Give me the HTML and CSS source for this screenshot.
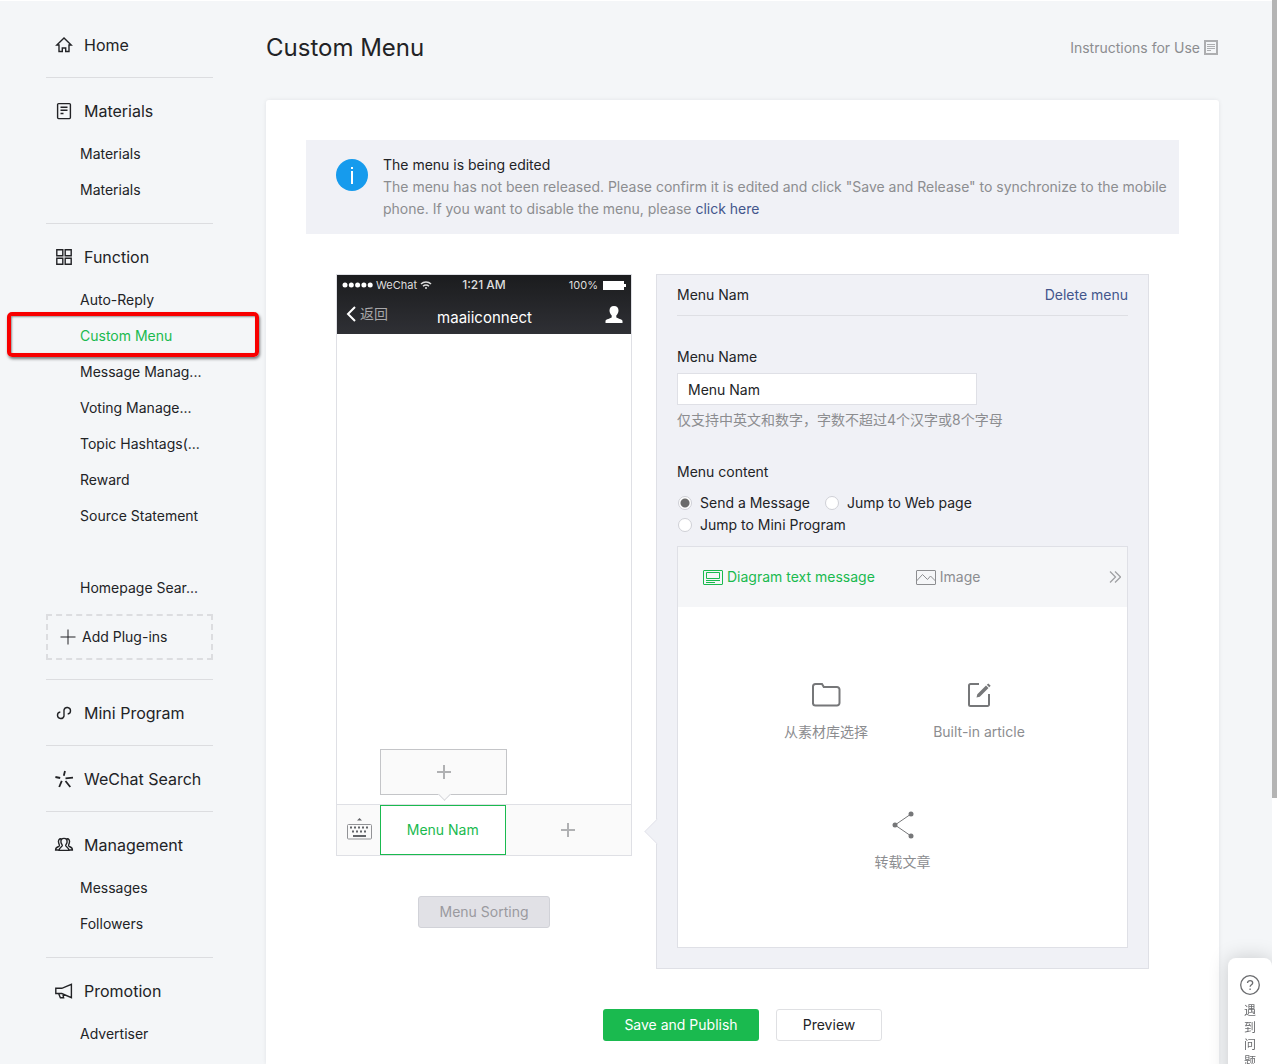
FILE: index.html
```html
<!DOCTYPE html>
<html lang="en">
<head>
<meta charset="utf-8">
<title>Custom Menu</title>
<meta name="viewport" content="width=device-width, initial-scale=1">
<link rel="stylesheet" href="styles.css">
</head>
<body>
<div class="layout">
  <nav class="sidebar" aria-label="Main">
    <section class="nav-group">
      <a class="nav-title" href="#home">
        <svg class="nav-icon" viewBox="0 0 16 16"><path d="M8 1 .8 8H3v6.500h3.300V11h3.400v3.500H13V8h2.200z"/></svg>Home</a>
    </section>
    <section class="nav-group">
      <a class="nav-title" href="#materials">
        <svg class="nav-icon" viewBox="0 0 16 16"><rect x="1.600" y=".6" width="12.800" height="15" rx="1"/><path d="M4.500 4.300h7M4.500 7.300h7M4.500 10.500h3"/></svg>Materials</a>
      <ul class="nav-list">
        <li><a href="#m1">Materials</a></li>
        <li><a href="#m2">Materials</a></li>
      </ul>
    </section>
    <section class="nav-group">
      <a class="nav-title" href="#function">
        <svg class="nav-icon" viewBox="0 0 16 16"><path d="M.8.800h6v6h-6zM9.200.800h6v6h-6zM.8 9.200h6v6h-6zM9.200 9.200h6v6h-6z"/></svg>Function</a>
      <ul class="nav-list">
        <li><a href="#auto">Auto-Reply</a></li>
        <li class="current"><a href="#menu" aria-current="page">Custom Menu</a></li>
        <li><a href="#message">Message Manag...</a></li>
        <li><a href="#voting">Voting Manage...</a></li>
        <li><a href="#topic">Topic Hashtags(...</a></li>
        <li><a href="#reward">Reward</a></li>
        <li><a href="#source">Source Statement</a></li>
        <li></li>
        <li><a href="#search">Homepage Sear...</a></li>
      </ul>
      <button class="add-plugin" type="button"><svg class="icon-plus" viewBox="0 0 16 16"><path d="M8 .500v15M.5 8h15"/></svg>Add Plug-ins</button>
    </section>
    <section class="nav-group">
      <a class="nav-title" href="#mini">
        <svg class="nav-icon" viewBox="0 0 16 16"><path d="M4.300 7A3.300 3.300 0 1 0 8 11V5a3.300 3.300 0 1 1 3.700 4"/></svg>Mini Program</a>
    </section>
    <section class="nav-group">
      <a class="nav-title" href="#wsearch">
        <svg class="nav-icon heavy" viewBox="0 0 16 16"><path d="M9 0 7.800 4.800M-.6 6l4.800 1M9.500 7.300l7.500-.6M5.800 9.800 3.200 16M9.500 10l4.800 6"/></svg>WeChat Search</a>
    </section>
    <section class="nav-group">
      <a class="nav-title" href="#management">
        <svg class="nav-icon" viewBox="0 0 16 16"><path d="M8 1.400C5.500 1.400 4.600 3 5 5.300c.2 1.500 1.500 2.300 1.300 3.400C6 10 3 10.500 3 13.400h10c0-2.900-3-3.400-3.300-4.700C9.500 7.600 10.800 6.800 11 5.300c.4-2.300-.5-3.900-3-3.900zM5.500 1.900C3 1.400 1.900 3.500 2.700 6c.5 1.500 1 2.200.6 3C2.800 10-.5 9.800-.4 13H3M10.500 1.900c2.500-.5 3.600 1.600 2.800 4.100-.5 1.500-1 2.200-.6 3 .5 1 3.800.8 3.700 4H13"/></svg>Management</a>
      <ul class="nav-list">
        <li><a href="#messages">Messages</a></li>
        <li><a href="#followers">Followers</a></li>
      </ul>
    </section>
    <section class="nav-group">
      <a class="nav-title" href="#promotion">
        <svg class="nav-icon" viewBox="0 0 16 16"><path d="M-.2 5.300h6l9.600-4v13.400L5.800 10.500h-6zM2.600 10.500l1.800 4.300h3.200l-.8-4"/></svg>Promotion</a>
      <ul class="nav-list">
        <li><a href="#advertiser">Advertiser</a></li>
      </ul>
    </section>
  </nav>

  <main class="main">
    <header class="page-head">
      <h1>Custom Menu</h1>
      <a class="instructions" href="#instructions">Instructions for Use
        <svg class="icon-doc" viewBox="0 0 14 15"><path class="frame" d="M1 1h12v13H1z"/><path d="M3 4.500h8M3 6.500h8M3 8.500h8M3 10.500h4"/></svg></a>
    </header>

    <div class="card">
      <div class="notice">
        <svg class="icon-info" viewBox="0 0 32 32"><circle cx="16" cy="16" r="16"/><path d="M15 8h2v2h-2zM15 12h2v13h-2z"/></svg>
        <div>
          <p class="notice-title">The menu is being edited</p>
          <p class="notice-text">The menu has not been released. Please confirm it is edited and click "Save and Release" to synchronize to the mobile phone. If you want to disable the menu, please <a href="#disable">click here</a></p>
        </div>
      </div>

      <div class="editor">
        <div class="preview">
          <div class="phone">
            <div class="phone-head">
              <div class="status">
                <span class="carrier"><svg class="icon-dots" viewBox="0 0 31 6"><circle cx="3" cy="3" r="2.500"/><circle cx="9.300" cy="3" r="2.500"/><circle cx="15.600" cy="3" r="2.500"/><circle cx="21.900" cy="3" r="2.500"/><circle cx="28.200" cy="3" r="2.500"/></svg>WeChat<svg class="icon-wifi" viewBox="0 0 12 10"><path d="M1 4a7 7 0 0 1 10 0M3 6.300a4.300 4.300 0 0 1 6 0"/><circle cx="6" cy="8" r="1"/></svg></span>
                <strong class="clock">1:21 AM</strong>
                <span class="battery">100%<svg class="icon-battery" viewBox="0 0 23 9"><path d="M0 0h21v9H0zM21 3h2v3h-2z"/></svg></span>
              </div>
              <div class="chat-head">
                <span class="back"><svg class="icon-back" viewBox="0 0 10 16"><path d="M9 1 2 8l7 7"/></svg>返回</span>
                <span class="chat-name">maaiiconnect</span>
                <svg class="icon-user" viewBox="0 0 18 17"><path d="M9 0c3 0 4.500 2 4.500 4.500 0 2-1 3.800-2.200 5v1.700C12 12.500 17.500 13 17.500 15v2H.5v-2c0-2 5.500-2.500 6.200-3.800V9.500C5.500 8.300 4.500 6.500 4.500 4.500 4.500 2 6 0 9 0z"/></svg>
              </div>
            </div>
            <div class="phone-body"></div>
            <div class="phone-menu">
              <span class="keyboard"><svg class="icon-keyboard" viewBox="0 0 25 22"><path class="outline" d="M1.500 6.500h22a1 1 0 0 1 1 1v12.500a1 1 0 0 1-1 1H1.500a1 1 0 0 1-1-1V7.500a1 1 0 0 1 1-1z"/><path class="keys" d="M3 9.500h19M5 13.500h15"/><path d="M6 17h13v2H6zM10 2.500h5L12.500 0z"/></svg></span>
              <div class="menu-slot">
                <button class="submenu" type="button" aria-label="Add submenu"><svg class="icon-add" viewBox="0 0 14 14"><path d="M7 0v14M0 7h14"/></svg></button>
                <button class="menu-button active" type="button">Menu Nam</button>
              </div>
              <div class="menu-slot">
                <button class="menu-button" type="button" aria-label="Add menu"><svg class="icon-add" viewBox="0 0 14 14"><path d="M7 0v14M0 7h14"/></svg></button>
              </div>
            </div>
          </div>
          <button class="btn btn-disabled" type="button" disabled>Menu Sorting</button>
        </div>

        <form class="panel">
          <div class="panel-head">
            <h2>Menu Nam</h2>
            <a href="#delete">Delete menu</a>
          </div>
          <label class="field-label" for="menu-name">Menu Name</label>
          <input class="text-input" id="menu-name" type="text" value="Menu Nam">
          <p class="hint">仅支持中英文和数字，字数不超过4个汉字或8个字母</p>
          <fieldset class="options">
            <legend>Menu content</legend>
            <label><input type="radio" name="content" checked>Send a Message</label>
            <label><input type="radio" name="content">Jump to Web page</label>
            <label><input type="radio" name="content">Jump to Mini Program</label>
          </fieldset>
          <div class="message-box">
            <div class="tabs">
              <button class="tab active" type="button"><svg class="icon-tab" viewBox="0 0 20 15"><rect x=".5" y=".5" width="19" height="14" rx=".5"/><path d="M3.500 2.500h13v6h-13zM3 10.500h14M3 12.500h9"/></svg>Diagram text message</button>
              <button class="tab" type="button"><svg class="icon-tab" viewBox="0 0 20 15"><rect x=".5" y=".5" width="19" height="14" rx=".5"/><path d="m.5 11 6-6.500 5 5 3-3.500 5 5"/></svg>Image</button>
              <button class="tab more" type="button" aria-label="More"><svg class="icon-more" viewBox="0 0 12 12"><path d="m1 .5 5.500 5.500L1 11.500M6 .5 11.500 6 6 11.500"/></svg></button>
            </div>
            <div class="choices">
              <a class="choice" href="#library"><svg class="icon-choice" viewBox="0 0 30 30"><path d="M2 24V6.500A2.500 2.500 0 0 1 4.500 4h6.500l1.800 3H26a2.500 2.500 0 0 1 2.500 2.500V23a2.500 2.500 0 0 1-2.500 2.500H4.500A2.500 2.500 0 0 1 2 23z"/></svg>从素材库选择</a>
              <a class="choice" href="#article"><svg class="icon-choice" viewBox="0 0 30 30"><path d="M15 4H6.500A1.500 1.500 0 0 0 5 5.500v19A1.500 1.500 0 0 0 6.500 26h17a1.500 1.500 0 0 0 1.500-1.500V14"/><path class="solid" d="m12.500 17.500.8-3.300L22 5.600l2.500 2.400-8.700 8.700zM22.800 4.800 24.300 3.400l2.400 2.400-1.500 1.500z"/></svg>Built-in article</a>
              <a class="choice" href="#repost"><svg class="icon-choice thin" viewBox="0 0 30 30"><path d="M23 4 7 15l16 11"/><g class="solid"><circle cx="23" cy="4" r="2.500"/><circle cx="7" cy="15" r="2.500"/><circle cx="23" cy="26" r="2.500"/></g></svg>转载文章</a>
            </div>
          </div>
        </form>
      </div>

      <div class="actions">
        <button class="btn btn-primary" type="button">Save and Publish</button>
        <button class="btn btn-default" type="button">Preview</button>
      </div>
    </div>
  </main>
</div>

<aside class="help">
  <svg class="icon-help" viewBox="0 0 20 20"><circle cx="10" cy="10" r="9.300"/><path d="M7.500 8c0-3.300 5.200-3.300 5.200 0 0 1.700-2.600 2-2.600 3.800M10.100 13.500v1.400"/></svg>
  <span>遇到问题</span>
</aside>
<div class="scroll-track"><div class="scroll-thumb"></div></div>
</body>
</html>
```

FILE: styles.css
```css
* { box-sizing: border-box; }

body {
  margin: 0;
  background: #f4f6f8;
  color: #222326;
  font: 14px/22px Inter, "Noto Sans CJK SC", sans-serif;
}

h1, h2, p, ul { margin: 0; padding: 0; font-weight: 400; }
ul { list-style: none; }
a { color: inherit; text-decoration: none; }
button, input { font: inherit; color: inherit; }
button { padding: 0; border: 0; background: none; }
svg { display: block; flex: none; fill: none; stroke: currentColor; }

.layout {
  display: grid;
  grid-template-columns: 167px minmax(0, 1fr);
  gap: 53px;
  min-height: 100vh;
  padding: 0 58px 0 46px;
  border-top: 1px solid #fff;
}

/* Sidebar */
.sidebar { padding-top: 11px; }
.nav-group { padding: 21px 0 7px; border-top: 1px solid #dcdde0; }
.nav-group:first-child { border-top: 0; }
.nav-group:last-child { padding-bottom: 0; }

.nav-title {
  display: flex;
  align-items: center;
  gap: 12px;
  padding: 0 0 13px 10px;
  font-size: 16px;
  line-height: 24px;
}
.nav-icon { width: 16px; height: 16px; overflow: visible; stroke-width: 1.4; }
.nav-icon.heavy { stroke-width: 1.8; }

.nav-list { padding-bottom: 8px; }
.nav-group:last-child .nav-list { padding-bottom: 0; }
.nav-list li { height: 36px; padding-left: 34px; line-height: 36px; white-space: nowrap; }
.nav-list .current { position: relative; color: #1aba4f; }
.current::after {
  content: "";
  position: absolute;
  inset: -6px -46px -3px -39px;
  border: 4px solid #f80000;
  border-radius: 5px;
  box-shadow: 1px 2px 3px rgba(0, 0, 0, .5), inset 1px 1px 2px rgba(0, 0, 0, .4);
  pointer-events: none;
}

.add-plugin {
  display: flex;
  align-items: center;
  gap: 6px;
  width: 100%;
  height: 46px;
  margin-bottom: 12px;
  padding-left: 12px;
  border: 2px dashed #dcdde0;
}
.icon-plus { width: 16px; height: 16px; }

/* Page heading */
.main { display: flex; flex-direction: column; }
.page-head {
  display: flex;
  align-items: center;
  justify-content: space-between;
  height: 99px;
  padding: 0 1px 6px 0;
}
h1 { font-size: 24px; line-height: 36px; }
.instructions { display: flex; align-items: center; gap: 4px; color: #8c8d90; }
.icon-doc { width: 14px; height: 15px; color: #adaeb0; }
.icon-doc .frame { stroke-width: 2; }

.card {
  flex: 1;
  padding: 40px 40px 23px;
  border-radius: 3px 3px 0 0;
  background: #fff;
  box-shadow: 0 0 4px rgba(0, 20, 40, .08);
}

/* Notice */
.notice {
  display: flex;
  gap: 15px;
  padding: 14px 4px 14px 30px;
  background: #f0f1f6;
}
.icon-info { width: 32px; height: 32px; margin-top: 5px; fill: #169bed; stroke: none; }
.icon-info path { fill: #fff; }
.notice-text { color: #8c8d90; }
.notice-text a, .panel-head a { color: #43568c; }

/* Editor */
.editor { display: flex; gap: 24px; padding: 40px 30px; }
.preview { display: flex; flex: none; flex-direction: column; align-items: center; gap: 40px; width: 296px; }
.phone { width: 100%; border: 1px solid #dfe0e5; }
.phone-head { height: 59px; background: linear-gradient(#1b1c1e, #2f3035); color: #fff; }
.status {
  display: grid;
  grid-template-columns: 1fr auto 1fr;
  align-items: center;
  padding: 0 5px;
  color: #dedede;
  font-size: 11px;
  line-height: 20px;
}
.carrier, .battery { display: flex; align-items: center; gap: 3px; }
.battery { justify-content: flex-end; gap: 5px; }
.clock { font-size: 12px; font-weight: 500; }
.icon-dots { width: 31px; height: 6px; fill: #fff; stroke: none; }
.icon-wifi { width: 12px; height: 10px; stroke-width: 1.5; }
.icon-wifi circle { fill: currentColor; stroke: none; }
.icon-battery { width: 23px; height: 9px; fill: #fff; stroke: none; }
.chat-head {
  display: grid;
  grid-template-columns: 1fr auto 1fr;
  align-items: center;
  padding: 0 8px 0 9px;
  line-height: 38px;
}
.back { display: flex; align-items: center; gap: 4px; color: #a9a9ab; }
.icon-back { width: 10px; height: 16px; stroke: #fff; stroke-width: 2; }
.chat-name { padding-top: 8px; font-size: 15px; line-height: 30px; }
.icon-user { justify-self: end; width: 18px; height: 17px; fill: #fff; stroke: none; }
.phone-body { height: 470px; }

.phone-menu {
  display: flex;
  height: 51px;
  border-top: 1px solid #dfe0e5;
  background: #fafafa;
}
.keyboard { display: grid; width: 43px; padding: 0 0 2px 2px; place-items: center; }
.icon-keyboard { width: 25px; height: 22px; fill: #626468; stroke: none; }
.icon-keyboard .outline { fill: none; stroke: #929396; }
.icon-keyboard .keys { stroke: #626468; stroke-width: 2; stroke-dasharray: 2 2; }
.menu-slot { position: relative; flex: 1; }
.menu-button { display: grid; width: 100%; height: 100%; place-items: center; }
.menu-button.active { border: 1px solid #1aba4f; background: #fff; color: #1aba4f; }
.icon-add { width: 14px; height: 14px; color: #b0b1b3; stroke-width: 2; }
.submenu {
  position: absolute;
  bottom: 60px;
  left: 0;
  display: grid;
  width: 127px;
  height: 46px;
  place-items: center;
  border: 1px solid #c4c5c8;
  background: #fafafa;
}
.submenu::after {
  content: "";
  position: absolute;
  bottom: -5px;
  left: 59px;
  width: 8px;
  height: 8px;
  border: solid #d7d8dc;
  border-width: 0 1px 1px 0;
  background: #fafafa;
  transform: rotate(45deg);
}

.btn { height: 32px; border: 1px solid transparent; border-radius: 3px; }
.btn-disabled { width: 132px; border-color: #d1d2d8; background: #e1e1e6; color: #9a9a9f; }

/* Settings panel */
.panel {
  position: relative;
  flex: 1;
  min-width: 0;
  padding: 0 20px 20px;
  border: 1px solid #dfe0e6;
  background: #f0f1f6;
}
.panel::before {
  content: "";
  position: absolute;
  top: 547px;
  left: -9px;
  width: 18px;
  height: 18px;
  border: solid #e4e5ec;
  border-width: 0 0 1px 1px;
  background: #f0f1f6;
  clip-path: polygon(0 0, 0 100%, 100% 100%);
  transform: rotate(45deg);
}
.panel-head {
  display: flex;
  align-items: center;
  justify-content: space-between;
  height: 41px;
  margin-bottom: 30px;
  border-bottom: 1px solid #dedfe4;
}
h2 { font-size: 14px; }
.field-label { display: block; margin-bottom: 5px; }
.text-input {
  display: block;
  width: 300px;
  max-width: 100%;
  height: 32px;
  padding: 0 10px;
  border: 1px solid #dfe0e6;
  background: #fff;
}
.hint { margin: 4px 0 30px; color: #8c8d90; }
.options {
  display: flex;
  flex-wrap: wrap;
  column-gap: 14px;
  min-width: 0;
  margin: 0 0 10px;
  padding: 0;
  border: 0;
}
.options legend { margin-bottom: 9px; padding: 0; }
.options label { display: flex; align-items: center; gap: 7px; }
.options input {
  width: 14px;
  height: 14px;
  margin: 0 1px;
  border: 1px solid #cfd0d6;
  border-radius: 50%;
  appearance: none;
  background: #fff;
}
.options input:checked { background: radial-gradient(circle, #6b6b6b 4px, #fff 5px); }

.message-box { border: 1px solid #dfe0e6; background: #fff; }
.tabs { display: flex; align-items: center; height: 60px; padding: 0 6px 0 25px; background: #f5f6f8; color: #8c8d90; }
.tab { display: flex; align-items: center; gap: 4px; margin-right: 41px; }
.tab.active { color: #1aba4f; }
.tab.more { margin: 0 0 0 auto; }
.icon-tab { width: 20px; height: 15px; }
.icon-more { width: 12px; height: 12px; stroke-width: 1.3; color: #a0a1a4; }
.choices {
  display: flex;
  flex-wrap: wrap;
  justify-content: center;
  row-gap: 67px;
  height: 340px;
  padding: 73px 70px 0;
  align-content: flex-start;
  color: #8c8d90;
}
.choice { display: flex; flex-direction: column; align-items: center; gap: 11px; width: 153px; }
.icon-choice { width: 30px; height: 30px; color: #767779; stroke-width: 2; }
.icon-choice.thin { stroke-width: 1; }
.icon-choice .solid { fill: currentColor; stroke: none; }

/* Page actions */
.actions { display: flex; justify-content: center; gap: 17px; }
.btn-primary { width: 156px; background: #1aba4f; color: #fff; }
.btn-default { width: 106px; border-color: #dfe0e3; background: #fff; }

/* Floating help tab */
.help {
  position: fixed;
  right: 5px;
  bottom: -54px;
  display: flex;
  flex-direction: column;
  align-items: center;
  gap: 7px;
  width: 44px;
  height: 160px;
  padding-top: 17px;
  border-radius: 8px 8px 0 0;
  background: #fff;
  box-shadow: 0 0 20px rgba(0, 0, 0, .18);
  color: #6b6c6f;
  font-size: 12px;
  line-height: 17px;
}
.help span { width: 12px; word-break: break-all; }
.icon-help { width: 20px; height: 20px; stroke-width: 1.3; }

.scroll-track { position: fixed; top: 0; right: 0; width: 5px; height: 100vh; background: #fff; }
.scroll-thumb { height: 75%; background: #b4b4b4; }
```
